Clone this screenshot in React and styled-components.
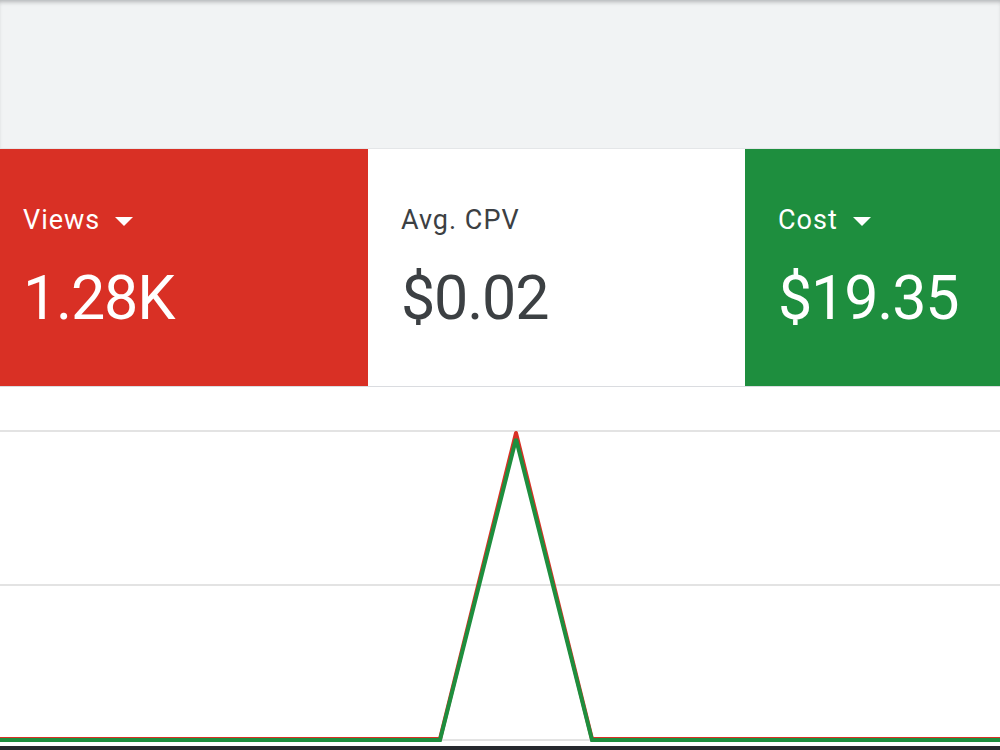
import styled, { createGlobalStyle } from "styled-components"

const GlobalStyle = createGlobalStyle`
    html, body {
        margin: 0;
        padding: 0;
        background: #ffffff;
        font-family: Roboto, "Liberation Sans", sans-serif;
    }
    * { box-sizing: border-box; }
`

const cards = [
    { label: "Views", value: "1.28K", bg: "#d93025", fg: "#ffffff", pad: 23, width: 368, menu: true },
    { label: "Avg. CPV", value: "$0.02", bg: "#ffffff", fg: "#3c4043", pad: 33, width: 377, menu: false },
    { label: "Cost", value: "$19.35", bg: "#1e8e3e", fg: "#ffffff", pad: 33, width: 255, menu: true },
]

export default function App(){
    return(
        <Page>
            <GlobalStyle />
            <TopBand />
            <CardRow>
                {cards.map(c => (
                    <Card key={c.label} $bg={c.bg} $fg={c.fg} $pad={c.pad} $width={c.width}>
                        <Label>
                            {c.label}
                            {c.menu && <Caret />}
                        </Label>
                        <Value>{c.value}</Value>
                    </Card>
                ))}
            </CardRow>
            <Chart>
                <svg width="1000" height="359" viewBox="0 0 1000 359">
                    <line x1="0" y1="44" x2="1000" y2="44" stroke="#e3e3e3" strokeWidth="2" />
                    <line x1="0" y1="198" x2="1000" y2="198" stroke="#e3e3e3" strokeWidth="2" />
                    <line x1="0" y1="353" x2="1000" y2="353" stroke="#e3e3e3" strokeWidth="2" />
                    <polyline points="0,352 440,352 516,46 592,352 1000,352" fill="none" stroke="#d93025" strokeWidth="4" strokeLinejoin="round" />
                    <polyline points="0,353 440,353 516,52 592,353 1000,353" fill="none" stroke="#1e8e3e" strokeWidth="4" strokeLinejoin="miter" />
                </svg>
            </Chart>
            <BottomBar />
        </Page>
    )
}

const Page = styled.div`
    width: 1000px;
    height: 750px;
    overflow: hidden;
    display: flex;
    flex-direction: column;
`

const TopBand = styled.div`
    height: 149px;
    flex-shrink: 0;
    background: #f1f3f4;
    box-shadow: inset 0 4px 4px -2px rgba(60, 64, 67, 0.35);
    border-bottom: 1px solid #e4e6e8;
`

const CardRow = styled.div`
    display: flex;
    height: 238px;
    flex-shrink: 0;
    border-bottom: 1px solid #dadce0;
`

const Card = styled.div`
    width: ${p => p.$width}px;
    flex-shrink: 0;
    background: ${p => p.$bg};
    color: ${p => p.$fg};
    padding: 56px 0 0 ${p => p.$pad}px;
    display: flex;
    flex-direction: column;
`

const Label = styled.div`
    display: flex;
    align-items: center;
    font-size: 27px;
    line-height: 30px;
    letter-spacing: 1px;
    height: 30px;
`

const Caret = styled.span`
    width: 0;
    height: 0;
    margin-left: 15px;
    margin-top: 2px;
    border-left: 9px solid transparent;
    border-right: 9px solid transparent;
    border-top: 9px solid currentColor;
`

const Value = styled.div`
    margin-top: 28px;
    font-size: 61px;
    line-height: 70px;
    letter-spacing: -1.2px;
`

const Chart = styled.div`
    height: 359px;
    flex-shrink: 0;
    svg { display: block; }
`

const BottomBar = styled.div`
    flex: 1;
    background: #26292e;
`
